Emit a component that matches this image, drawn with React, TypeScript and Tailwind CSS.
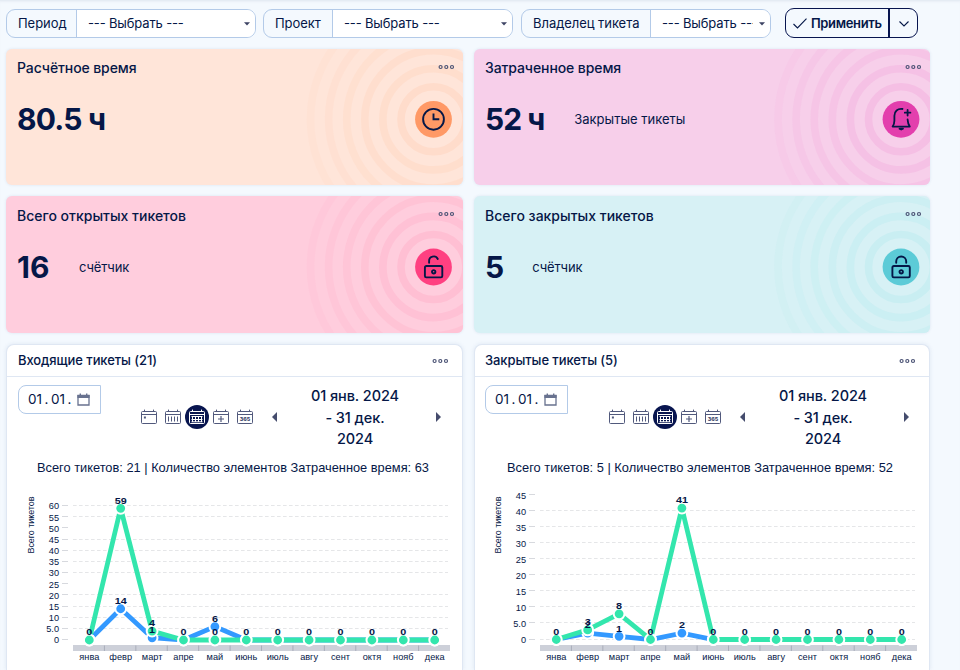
import React from 'react';

const NAVY = '#051747';

function Dots() {
  return (
    <svg width="17" height="6" viewBox="0 0 17 6" fill="none" stroke="#4b5375" strokeWidth="1.2">
      <circle cx="2.6" cy="3" r="1.5" />
      <circle cx="8.3" cy="3" r="1.5" />
      <circle cx="14" cy="3" r="1.5" />
    </svg>
  );
}

function Filter({ label, className, labelClass, valueClass }: { label: string; className: string; labelClass: string; valueClass: string }) {
  return (
    <div className={`flex h-[29px] overflow-hidden rounded-[9px] border border-[#b3cae8] text-[13px] leading-[27px] tracking-[-0.05px] ${className}`}>
      <div className={`shrink-0 whitespace-nowrap border-r border-[#b3cae8] pl-[11px] ${labelClass}`}>{label}</div>
      <div className="flex min-w-0 flex-1 items-center bg-white pr-[5px] pl-[11px]">
        <span className={`overflow-hidden whitespace-pre tracking-[-0.15px] ${valueClass}`}>--- Выбрать ---</span>
        <svg className="ml-auto shrink-0" width="6" height="4" viewBox="0 0 6 4">
          <path d="M0 .3h6L3 3.5z" fill="#3d4363" />
        </svg>
      </div>
    </div>
  );
}

const stroke = { fill: 'none', stroke: NAVY, strokeWidth: 1.9, strokeLinecap: 'round', strokeLinejoin: 'round' } as const;

function ClockGlyph() {
  return (
    <g {...stroke}>
      <circle r="10.4" />
      <path d="M0 -5.8V0H5.8" strokeLinecap="butt" strokeLinejoin="miter" />
    </g>
  );
}

function BellGlyph() {
  return (
    <g {...stroke} strokeWidth={1.8}>
      <path d="M1.5 -10.3C-3.5 -11 -6.6 -7.8 -6.6 -3.5V1.5C-6.6 4.5 -7.5 6 -8.4 7.3H8.8C7.4 5.5 6.8 3.6 6.6 .2" />
      <path d="M6.6 -9.4V-3.8M3.8 -6.6H9.4" />
      <path d="M-1.5 9.3H2L.2 10.2z" />
    </g>
  );
}

function LockGlyph({ shackle }: { shackle: string }) {
  return (
    <g {...stroke} strokeWidth={1.9}>
      <rect x="-8.6" y="-1" width="17.4" height="11.4" rx="1.4" />
      <circle cx=".2" cy="4.8" r="1.7" />
      <path d={shackle} />
    </g>
  );
}

type StatProps = {
  title: string; titleClass: string; value: string; valueClass?: string; note?: string; noteClass?: string; bg: string; h: number; w: number;
  cx: number; ring: string; disc: string; iconY: number; glyph: React.ReactNode; bodyClass: string;
};

function StatCard({ title, titleClass, value, valueClass = '', note, noteClass = '', bg, h, w, cx, ring, disc, iconY, glyph, bodyClass }: StatProps) {
  return (
    <section className={`relative overflow-hidden rounded-md shadow-[0_0_3px_rgba(90,120,170,.16)] ${bg}`} style={{ height: h, width: w }}>
      <svg className="absolute inset-0" width={w} height={h}>
        {[0, 1, 2, 3, 4, 5].map((i) => (
          <circle key={i} cx={cx} cy={iconY} r={32.5 + i * 18.1} fill="none" stroke={ring} strokeWidth="7.6" opacity={1 - i * 0.13} />
        ))}
        <circle cx={cx} cy={iconY} r="18.4" fill={disc} />
        <g transform={`translate(${cx} ${iconY})`}>{glyph}</g>
      </svg>
      <div className="relative flex h-[30px] justify-between pr-[8px] pl-[11px]">
        <h2 className={`text-[14px] leading-[20px] font-medium ${titleClass}`}>{title}</h2>
        <div className="pt-[15px] leading-[0]"><Dots /></div>
      </div>
      <div className={`relative flex items-center pl-[11px] ${bodyClass}`}>
        <span className={`text-[30px] leading-[36px] font-bold whitespace-pre ${valueClass}`}>{value}</span>
        {note && <span className={`pt-[2px] text-[13px] ${noteClass}`}>{note}</span>}
      </div>
    </section>
  );
}

function CalIcon({ kind }: { kind: number }) {
  const active = kind === 2;
  const c = active ? '#ffffff' : '#51597c';
  return (
    <div className={`flex size-[24px] items-center justify-center rounded-full ${active ? 'bg-[#08154f]' : ''}`}>
      <svg width="16" height="16" viewBox="0 0 16 16" fill="none" stroke={c} strokeWidth="1">
        <rect x=".5" y="2.5" width="15" height="12" rx="1" />
        <path d="M.8 5.5H15.2M3.5 .6V3M12.5 .6V3" />
        {kind === 0 && <rect x="3.4" y="8" width="1" height="1" />}
        {kind === 1 && <path d="M3.5 7.5v5M6.5 7.5v5M9.5 7.5v5M12.5 7.5v5" />}
        {kind === 2 && <path d="M2.5 7.5H13.5M2.5 10.5H13.5M2.5 12.8H13.5M3.5 7v6M6.5 7v6M9.5 7v6M12.5 7v6" />}
        {kind === 3 && <path d="M8 7v6M5 10H11" strokeWidth="1.2" />}
        {kind === 4 && (
          <text x="8" y="12" textAnchor="middle" fontSize="5.2" fontWeight="800" fill="#353d63" stroke="none" textLength="10.4" lengthAdjust="spacingAndGlyphs">365</text>
        )}
      </svg>
    </div>
  );
}

const MONTHS = ['янва', 'февр', 'март', 'апре', 'май', 'июнь', 'июль', 'авгу', 'сент', 'октя', 'нояб', 'дека'];

type ChartProps = {
  x0: number; viewX: number; ticks: string[]; step: number; base: number; noGrid: number[];
  blue: number[]; green: number[]; caption: string; capX: number; capW: number;
};

function Chart({ x0, viewX, ticks, step, base, noGrid, blue, green, caption, capX, capW }: ChartProps) {
  const px = (i: number) => x0 + 83.3 + i * 31.4;
  const py = (v: number) => base - (v / 5) * step;
  const line = (d: number[]) => d.map((v, i) => `${px(i)},${py(v)}`).join(' ');
  const series = (d: number[], color: string) => (
    <g>
      <polyline points={line(d)} fill="none" stroke={color} strokeWidth="4.8" />
      {d.map((v, i) => <circle key={i} cx={px(i)} cy={py(v)} r="5.4" fill={color} stroke="#fff" strokeWidth="2" />)}
    </g>
  );
  const label = (v: number, i: number) => (
    <text x={px(i)} y={py(v) - 4.6} textLength={String(v).length * 6} lengthAdjust="spacingAndGlyphs">{v}</text>
  );
  const left = x0 + 67;
  return (
    <svg className="block" width="455" height="218" viewBox={`${viewX} 452 455 218`} fontFamily="'Liberation Sans', Arial, sans-serif" fill={NAVY}>
      <text x={capX} y="472" fontSize="12.8" textLength={capW} lengthAdjust="spacingAndGlyphs">{caption}</text>
      <text transform={`translate(${x0 + 28} 553.5) rotate(-90)`} fontSize="9" textLength="57">Всего тикетов</text>
      {ticks.map((t, i) => {
        const y = base - i * step;
        return (
          <g key={t}>
            <text x={x0 + 53} y={y + 3.4} fontSize="9.2" textAnchor="end">{t}</text>
            <path d={`M${x0 + 56} ${Math.round(y) - 0.5}h6`} stroke="#d7d9de" />
            {!noGrid.includes(i) && <path d={`M${left} ${Math.round(y) - 0.5}H${x0 + 442}`} stroke="#e5e6e8" strokeDasharray="3.6 2.4" />}
          </g>
        );
      })}
      <rect x={left} y="645" width="377" height="6" fill="#cdd0d9" />
      {MONTHS.map((m, i) => (
        <g key={m}>
          {i > 0 && <path d={`M${left + i * 31.42} 645.5v5.5`} stroke="#a9adba" />}
          <text x={px(i)} y="660" fontSize="9.2" textAnchor="middle">{m}</text>
        </g>
      ))}
      {series(blue, '#3399ff')}
      {series(green, '#33e6ad')}
      <g fontSize="9.8" fontWeight="700" textAnchor="middle">
        {MONTHS.map((m, i) => (
          <g key={m}>
            {label(blue[i], i)}
            {green[i] !== blue[i] && label(green[i], i)}
          </g>
        ))}
      </g>
    </svg>
  );
}

type PanelProps = { title: string; chart: ChartProps; widthClass: string; shiftClass: string; iconsClass: string; prevClass: string };

function Panel({ title, chart, widthClass, shiftClass, iconsClass, prevClass }: PanelProps) {
  return (
    <section className={`h-[326px] overflow-hidden rounded-t-[8px] border border-b-0 border-[#dfe7f3] bg-white shadow-[0_0_4px_rgba(90,120,170,.14)] ${widthClass}`}>
      <header className="flex h-[32px] items-center justify-between border-b border-[#dfe7f3] pr-[13px]">
        <h2 className={`text-[13px] font-medium tracking-[-0.08px] ${shiftClass}`}>{title}</h2>
        <Dots />
      </header>
      <div className={`flex h-[75px] items-start pt-[8px] ${shiftClass}`}>
        <div className="flex h-[29px] w-[83px] shrink-0 items-center justify-between rounded-l-[8px] border border-[#b3cae8] pr-[10px] pl-[9px]">
          <span className="text-[13.5px] whitespace-pre">01<span className="px-[2.5px]">.</span>01<span className="px-[2.5px]">.</span></span>
          <svg width="13" height="13" viewBox="0 0 13 13">
            <path d="M1 2.5h11v9.5H1z" fill="none" stroke="#68728f" strokeWidth="1.3" />
            <path d="M.4 2h12.2v3H.4zM2.6 .4h1.4V2H2.6zM9 .4h1.4V2H9z" fill="#68728f" />
          </svg>
        </div>
        <div className={`flex shrink-0 pt-[20px] ${iconsClass}`}>
          {[0, 1, 2, 3, 4].map((k) => <CalIcon key={k} kind={k} />)}
        </div>
        <svg className={`mt-[27px] shrink-0 ${prevClass}`} width="5" height="10" viewBox="0 0 5 10"><path d="M5 0v10L0 5z" fill="#454c6d" /></svg>
        <p className="ml-[31px] w-[94px] shrink-0 text-center text-[14.5px] leading-[21.5px] font-medium tracking-[-0.08px]">01 янв. 2024<br />- 31 дек.<br />2024</p>
        <svg className="mt-[27px] ml-[34px] shrink-0" width="5" height="10" viewBox="0 0 5 10"><path d="M0 0v10l5-5z" fill="#454c6d" /></svg>
      </div>
      <Chart {...chart} />
    </section>
  );
}

export default function App() {
  return (
    <main className="h-[670px] w-[960px] overflow-hidden bg-[#f4f9fe] font-['Inter','Noto_Sans',sans-serif] text-[#051747] shadow-[inset_0_3px_3px_-2px_rgba(70,90,130,.12)]">
      <div className="flex h-[49px] items-start pt-[9px] pl-[6px]">
        <Filter label="Период" className="w-[250px]" labelClass="w-[70px]" valueClass="" />
        <Filter label="Проект" className="ml-[7px] w-[250px]" labelClass="w-[69px]" valueClass="" />
        <Filter label="Владелец тикета" className="ml-[8px] w-[250px]" labelClass="w-[129px]" valueClass="w-[91px]" />
        <div className="ml-[14px] -mt-px flex h-[30px] w-[133px] rounded-[9px] border border-[#08154f] text-[13px] font-semibold">
          <div className="flex w-[104px] items-center border-r-2 border-[#08154f] pt-px pl-[7px] tracking-[-0.35px]">
            <svg className="mr-[4px] shrink-0" width="14" height="11" viewBox="0 0 14 11" fill="none" stroke={NAVY} strokeWidth="1.1"><path d="M.5 6 4.5 10 13.5 .6" /></svg>
            Применить
          </div>
          <div className="flex flex-1 items-center justify-center pt-px">
            <svg width="10" height="6" viewBox="0 0 10 6" fill="none" stroke={NAVY} strokeWidth="1.1"><path d="M.5 .5 5 5 9.5 .5" /></svg>
          </div>
        </div>
      </div>
      <div className="grid grid-cols-[457px_456px] gap-x-[11px] gap-y-[11px] pl-[6px]">
        <StatCard title="Расчётное время" titleClass="pt-[9px] tracking-[-0.1px]" value="80.5 ч" valueClass="tracking-[-0.8px]" bg="bg-[#ffe5d9]" ring="#ffdccb" disc="#ff9966" h={136} w={457} cx={427.5} iconY={70.3} glyph={<ClockGlyph />} bodyClass="pt-[22px]" />
        <StatCard title="Затраченное время" titleClass="pt-[9px] tracking-[-0.1px]" value="52 ч" valueClass="tracking-[-1px]" note="Закрытые тикеты" noteClass="ml-[30px]" bg="bg-[#f7cfea]" ring="#f5bfe4" disc="#e33fad" h={136} w={456} cx={427} iconY={70.3} glyph={<BellGlyph />} bodyClass="pt-[22px]" />
        <StatCard title="Всего открытых тикетов" titleClass="pt-[10px]" value="16" note="счётчик" noteClass="ml-[29.5px] tracking-[-0.1px]" bg="bg-[#ffcddd]" ring="#ffbfd3" disc="#ff4081" h={137} w={457} cx={427.5} iconY={71} glyph={<LockGlyph shackle="M-4.4 -4.3V-5.6A4.6 4.6 0 0 1 4.3 -8" />} bodyClass="pt-[23px]" />
        <StatCard title="Всего закрытых тикетов" titleClass="pt-[10px]" value="5" note="счётчик" noteClass="ml-[28px] tracking-[-0.1px]" bg="bg-[#d7f1f5]" ring="#c9eef2" disc="#5ccbd7" h={137} w={456} cx={427} iconY={71} glyph={<LockGlyph shackle="M-4.8 -4.3V-5.5A5 5 0 0 1 5.2 -5.5V-4.3" />} bodyClass="pt-[23px]" />
        <Panel
          title="Входящие тикеты (21)"
          widthClass="w-[457px]" shiftClass="pl-[11px]" iconsClass="ml-[36.4px]" prevClass="ml-[14.6px]"
          chart={{
            x0: 6, viewX: 7, base: 640, step: 11.16, noGrid: [0, 5, 10], capX: 37, capW: 392,
            ticks: ['0', '5.0', '10', '15', '20', '25', '30', '35', '40', '45', '50', '55', '60'],
            blue: [0, 14, 1, 0, 6, 0, 0, 0, 0, 0, 0, 0], green: [0, 59, 4, 0, 0, 0, 0, 0, 0, 0, 0, 0],
            caption: 'Всего тикетов: 21 | Количество элементов Затраченное время: 63',
          }}
        />
        <Panel
          title="Закрытые тикеты (5)"
          widthClass="w-[456px]" shiftClass="pl-[10px]" iconsClass="ml-[36.5px]" prevClass="ml-[15.5px]"
          chart={{
            x0: 473, viewX: 475, base: 639.5, step: 16.03, noGrid: [9], capX: 507, capW: 386,
            ticks: ['0', '5.0', '10', '15', '20', '25', '30', '35', '40', '45'],
            blue: [0, 2, 1, 0, 2, 0, 0, 0, 0, 0, 0, 0], green: [0, 3, 8, 0, 41, 0, 0, 0, 0, 0, 0, 0],
            caption: 'Всего тикетов: 5 | Количество элементов Затраченное время: 52',
          }}
        />
      </div>
    </main>
  );
}
